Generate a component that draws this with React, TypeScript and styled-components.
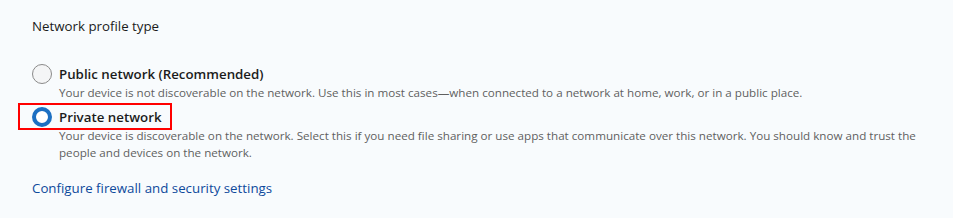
import React from "react";
import styled, { createGlobalStyle } from "styled-components";

const GlobalStyle = createGlobalStyle`
  html, body {
    margin: 0;
    padding: 0;
    background: #f8fbfd;
  }
  body {
    font-family: "Open Sans", "Noto Sans", sans-serif;
    color: #1b1b1b;
  }
`;

interface OptionProps {
  title: string;
  description: string;
  checked?: boolean;
  highlighted?: boolean;
}

const Option = ({ title, description, checked, highlighted }: OptionProps) => (
  <OptionRow>
    <OptionHead>
      {highlighted && <Highlight />}
      <Radio $checked={checked} />
      <OptionTitle>{title}</OptionTitle>
    </OptionHead>
    <OptionDesc>{description}</OptionDesc>
  </OptionRow>
);

export default function App() {
  return (
    <>
      <GlobalStyle />
      <Page>
        <Heading>Network profile type</Heading>
        <Options>
          <Option
            title="Public network (Recommended)"
            description="Your device is not discoverable on the network. Use this in most cases—when connected to a network at home, work, or in a public place."
          />
          <Option
            checked
            highlighted
            title="Private network"
            description="Your device is discoverable on the network. Select this if you need file sharing or use apps that communicate over this network. You should know and trust the people and devices on the network."
          />
        </Options>
        <Link href="#">Configure firewall and security settings</Link>
      </Page>
    </>
  );
}

const Page = styled.div`
  width: 953px;
  height: 218px;
  box-sizing: border-box;
  padding: 16px 0 0 32px;
`;

const Heading = styled.div`
  font-size: 13.3px;
  line-height: 20px;
  color: #1b1b1b;
`;

const Options = styled.div`
  display: flex;
  flex-direction: column;
  gap: 6px;
  margin-top: 28px;
`;

const OptionRow = styled.div`
  display: flex;
  flex-direction: column;
`;

const OptionHead = styled.div`
  position: relative;
  display: flex;
  align-items: center;
  gap: 7px;
  height: 20px;
  align-self: flex-start;
`;

const Highlight = styled.span`
  position: absolute;
  left: -14px;
  right: -10px;
  top: -4px;
  bottom: -3px;
  border: 2px solid #ff0000;
  pointer-events: none;
`;

const Radio = styled.span<{ $checked?: boolean }>`
  width: 20px;
  height: 20px;
  box-sizing: border-box;
  border-radius: 50%;
  background: ${(p) => (p.$checked ? "#ffffff" : "#f4f5f6")};
  border: ${(p) => (p.$checked ? "4px solid #1c6fc2" : "1px solid #8a8a8a")};
  flex-shrink: 0;
`;

const OptionTitle = styled.span`
  font-size: 13.3px;
  font-weight: 600;
  color: #1b1b1b;
`;

const OptionDesc = styled.div`
  margin-left: 27px;
  max-width: 870px;
  font-size: 11.65px;
  line-height: 17px;
  color: #5f5f5f;
`;

const Link = styled.a`
  display: inline-block;
  margin-top: 17px;
  font-size: 13.3px;
  line-height: 20px;
  color: #0e4a9c;
  text-decoration: none;
`;
